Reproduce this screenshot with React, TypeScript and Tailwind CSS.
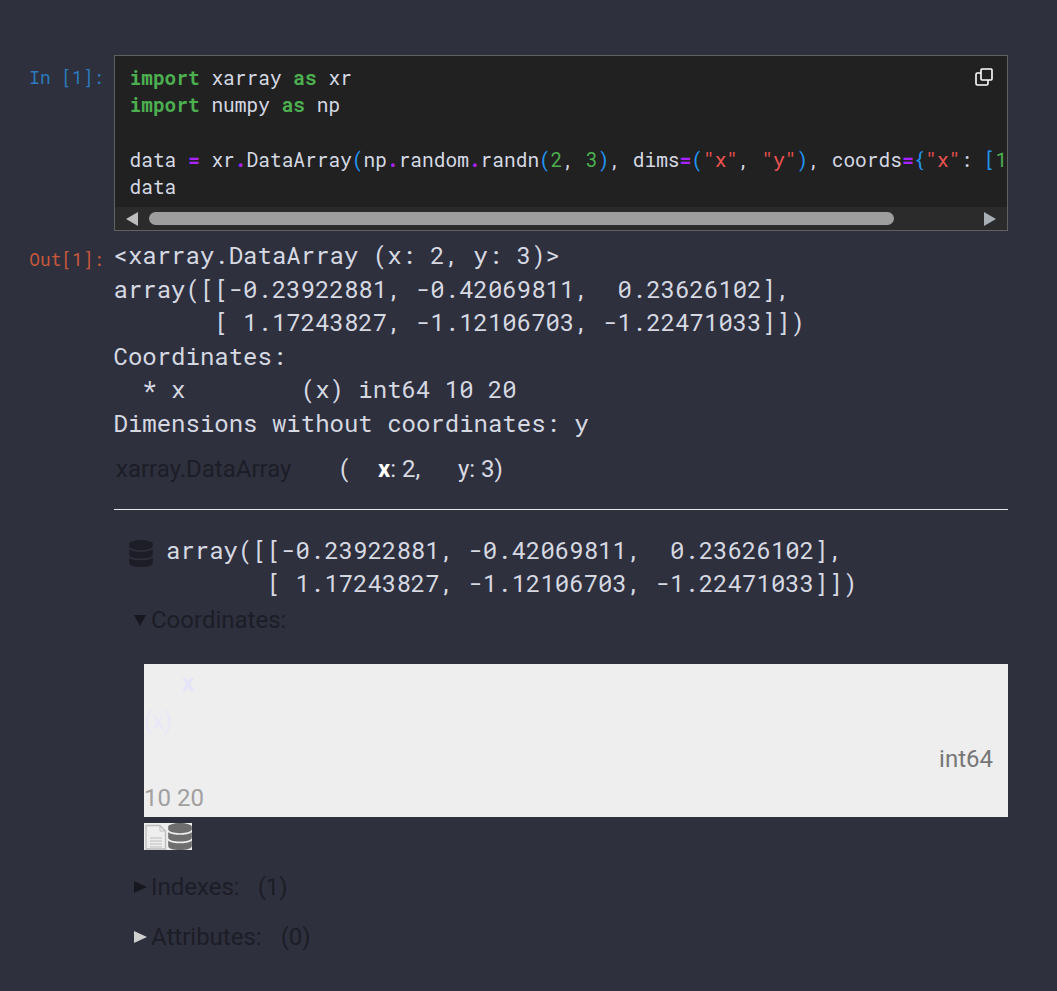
import { FaDatabase } from "react-icons/fa";

const mono = "font-['Roboto_Mono','DejaVu_Sans_Mono','Liberation_Mono',monospace]";

function Kw({ children }: { children: string }) {
  return <span className="font-bold text-[#4caf50]">{children}</span>;
}
function Op({ children }: { children: string }) {
  return <span className="font-bold text-[#aa22ff]">{children}</span>;
}
function Br({ children }: { children: string }) {
  return <span className="text-[#2196f3]">{children}</span>;
}
function Num({ children }: { children: string }) {
  return <span className="text-[#4caf50]">{children}</span>;
}
function Str({ children }: { children: string }) {
  return <span className="text-[#ef5350]">{children}</span>;
}

function CopyIcon() {
  return (
    <svg width="18" height="18" viewBox="0 0 18 18" fill="none" stroke="#ffffff" strokeWidth="1.6">
      <rect x="6" y="1" width="11" height="11" rx="1" />
      <path d="M6 5H2.5A1.5 1.5 0 0 0 1 6.500V15.500A1.500 1.500 0 0 0 2.500 17H11.500A1.500 1.500 0 0 0 13 15.500V12" />
    </svg>
  );
}

function FileIcon() {
  return (
    <svg width="24" height="27" viewBox="0 0 24 27" fill="none" stroke="#bdbdbd" strokeWidth="1">
      <path d="M2 2.500H16L21.500 8V26H2Z" strokeWidth="1.300" />
      <path d="M16 2.500V8H21.500" />
      <path d="M6 15H18M6 18H18M6 21H18M6 24H18" />
    </svg>
  );
}

function CodeCell() {
  return (
    <div className="relative flex-1 min-w-0 border border-[#616161] bg-[#212121]">
      <pre className={`${mono} h-[151px] overflow-hidden pl-[14.5px] pr-[15px] pt-[7.7px] text-[19.5px] leading-[27.3px] text-[#d5d9e4]`}>
        <Kw>import</Kw> xarray <Kw>as</Kw> xr{"\n"}
        <Kw>import</Kw> numpy <Kw>as</Kw> np{"\n\n"}
        data <Op>=</Op> xr<Op>.</Op>DataArray<Br>(</Br>np<Op>.</Op>random<Op>.</Op>randn<Br>(</Br><Num>2</Num>, <Num>3</Num><Br>)</Br>, dims<Op>=</Op><Br>(</Br><Str>"x"</Str>, <Str>"y"</Str><Br>)</Br>, coords<Op>=</Op><Br>{"{"}</Br><Str>"x"</Str>: <Br>[</Br><Num>10</Num>, <Num>20</Num><Br>]</Br><Br>{"})"}</Br>{"\n"}
        data
      </pre>
      <div className="flex h-[23px] items-center bg-[#2b2b2b] pl-[11px] pr-[11px]">
        <svg width="12" height="14" viewBox="0 0 12 14"><path d="M0 7L12 0V14Z" fill="#bdbdbd" /></svg>
        <div className="ml-[11px] h-[13px] w-[745px] rounded-full bg-[#9e9e9e]" />
        <svg className="ml-auto" width="12" height="14" viewBox="0 0 12 14"><path d="M12 7L0 0V14Z" fill="#a9b0b5" /></svg>
      </div>
      <div className="absolute right-[14px] top-[12px]">
        <CopyIcon />
      </div>
    </div>
  );
}

export default function App() {
  return (
    <div className="min-h-[991px] bg-[#2e303e] pt-[55px] font-['Roboto',sans-serif]">
      <div className="flex pr-[49px]">
        <div className={`${mono} w-[104px] pt-[10px] text-right text-[17.8px] leading-[24px] text-[#2b7bbd]`}>In [1]:</div>
        <div className="w-[10px]" />
        <CodeCell />
      </div>

      <div className="mt-[8px] flex pr-[49px]">
        <div className={`${mono} w-[104px] pt-[8px] text-right text-[17.8px] leading-[24px] text-[#c8583a]`}>Out[1]:</div>
        <div className="w-[10px]" />
        <div className="min-w-0 flex-1">
          <pre className={`${mono} -ml-[0.5px] text-[24px] leading-[33.6px] text-[#d6d9e2]`}>{`<xarray.DataArray (x: 2, y: 3)>
array([[-0.23922881, -0.42069811,  0.23626102],
       [ 1.17243827, -1.12106703, -1.22471033]])
Coordinates:
  * x        (x) int64 10 20
Dimensions without coordinates: y`}</pre>

          <div className="mt-[10px] flex h-[37px] items-center text-[24px] leading-[37px] text-[#d8dae2]">
            <span className="ml-[2px] w-[224px] text-[#1c1d26]">xarray.DataArray</span>
            <span className="w-[38px]">(</span>
            <span className="w-[80px]"><b className="font-bold text-white">x</b>: 2,</span>
            <span>y: 3)</span>
          </div>
          <div className="mt-[21px] h-px bg-[#e6e6e6]" />

          <div className="mt-[24px] flex pl-[15px]">
            <FaDatabase className="mt-[6px] h-[27px] w-[24px] text-[#1c1d26]" />
            <pre className={`${mono} ml-[13px] text-[24px] leading-[33.6px] text-[#d6d9e2]`}>{`array([[-0.23922881, -0.42069811,  0.23626102],
       [ 1.17243827, -1.12106703, -1.22471033]])`}</pre>
          </div>

          <div className="mt-[1px] flex h-[37px] items-center pl-[20px] text-[24px] text-[#1c1d26]">
            <svg width="12" height="11" viewBox="0 0 12 11" className="mr-[5px]"><path d="M0 0H12L6 11Z" fill="#17181f" /></svg>
            Coordinates:
          </div>

          <div className="ml-[30px] mt-[25px] flex h-[153px] flex-col bg-[#eeeeee] text-[24px] leading-[38.25px]">
            <div className="h-[38.25px] pl-[38px] font-bold text-[#e4e4f8]">x</div>
            <div className="h-[38.25px] text-[#e8e8f8]">(x)</div>
            <div className="h-[38.25px] pr-[15px] text-right text-[#777777]">int64</div>
            <div className="h-[38.25px] text-[#a0a0a0]">10 20</div>
          </div>

          <div className="ml-[30px] mt-[6px] flex h-[27px] w-[48px] bg-[#eeeeee]">
            <FileIcon />
            <FaDatabase className="h-[27px] w-[24px] text-[#6e6e6e]" />
          </div>

          <div className="mt-[19px] flex h-[37px] items-center pl-[20px] text-[24px] text-[#1c1d26]">
            <svg width="13" height="12" viewBox="0 0 13 12" className="mr-[4px]"><path d="M0 0L13 6L0 12Z" fill="#17181f" /></svg>
            <span className="mr-[18px]">Indexes:</span>
            <span>(1)</span>
          </div>
          <div className="mt-[13px] flex h-[37px] items-center pl-[20px] text-[24px] text-[#1c1d26]">
            <svg width="13" height="12" viewBox="0 0 13 12" className="mr-[4px]"><path d="M0 0L13 6L0 12Z" fill="#d0d0d0" /></svg>
            <span className="mr-[19px]">Attributes:</span>
            <span>(0)</span>
          </div>
        </div>
      </div>
    </div>
  );
}
